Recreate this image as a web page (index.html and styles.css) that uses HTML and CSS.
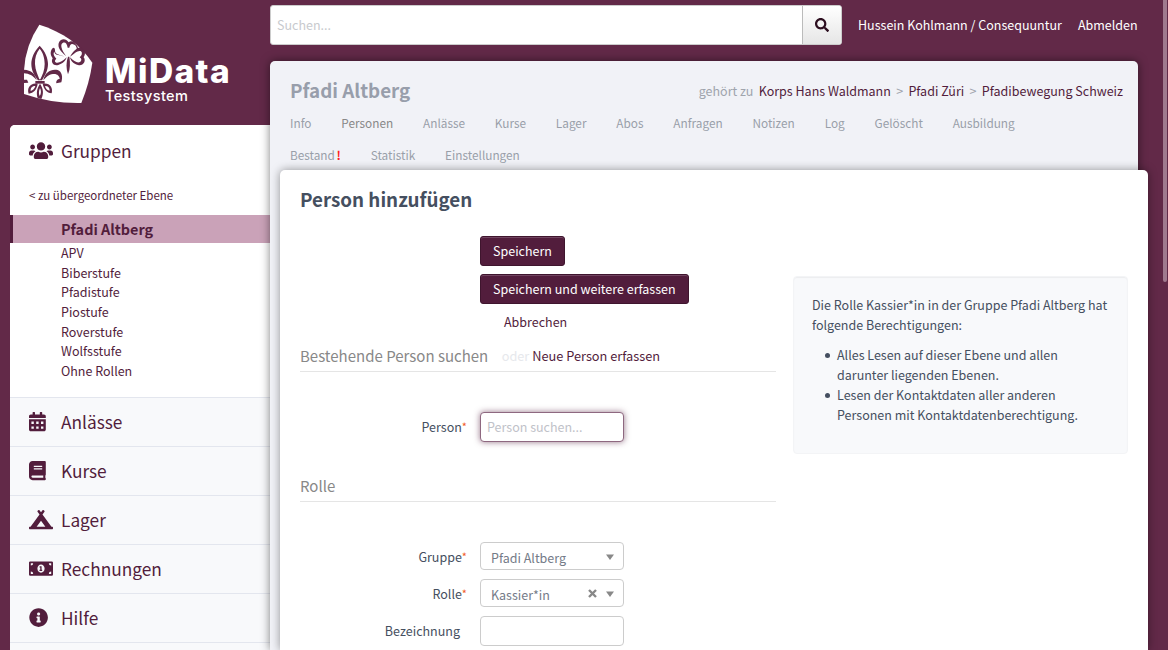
FILE: index.html
```html
<!DOCTYPE html>
<html lang="de">
<head>
<meta charset="utf-8">
<title>Person hinzufügen - MiData</title>
<link rel="stylesheet" href="styles.css">
</head>
<body>
<div class="page">
  <aside class="side">
    <a class="logo">
      <svg class="logo-mark" viewBox="0 0 240 270">
        <path fill="#fff" d="M58 14C91 24 124 40 152 60Q190 88 217 128Q209 187 184 249Q95 251 12 222V150Q16 76 58 14Z"/>
        <g class="ink">
          <path fill-rule="evenodd" d="M59 77C76 94 84 115 84 132C84 151 75 166 66 181H54C43 166 34 151 34 132C34 114 42 94 59 77ZM59 86C49 98 44 115 45 132C46 151 53 164 58 178H61C68 164 74 150 74 132C74 115 69 97 59 86Z"/>
          <path d="M46 183H74V191H46Z"/>
          <path d="M12 149C34 150 46 162 50 181C39 167 28 161 12 160Z"/>
          <path d="M70 181C75 156 93 146 113 150C126 155 129 170 124 187L109 190C108 184 111 177 119 177C119 167 110 160 99 162C85 164 78 172 70 181Z"/>
          <path d="M12 179H21L25 188L12 189Z"/>
          <path fill-rule="evenodd" d="M53 191C31 187 20 205 26 221C41 219 51 208 53 191ZM46 198C44 206 39 211 32 213C31 203 37 198 46 198Z"/>
          <path fill-rule="evenodd" d="M68 191C89 187 100 202 95 220C80 218 71 208 68 191ZM75 198C77 206 82 211 89 212C89 203 85 198 75 198Z"/>
          <path fill-rule="evenodd" d="M60 191C70 206 72 220 64 237L53 234C48 218 51 205 60 191ZM60 204C56 213 56 222 59 228C64 221 64 212 60 204Z"/>
          <path d="M138 108C121 94 113 83 116 70C120 56 137 53 146 67C153 59 165 65 170 78L163 74C154 69 150 73 148 83H143C141 70 135 65 128 69C120 74 124 88 138 108Z"/>
          <path d="M140 112C122 104 104 106 105 91C105 83 100 79 94 90C89 103 95 109 98 115C91 128 101 139 115 135C130 131 137 122 140 112C128 123 121 128 112 128C104 128 103 121 109 116C103 109 98 101 103 95C104 108 122 103 140 112Z"/>
          <path d="M150 110C162 90 177 77 189 87C199 97 194 106 191 112C200 124 189 139 174 135C160 132 152 123 150 112C163 125 174 131 181 125C187 120 183 115 179 112C186 106 188 99 183 94C175 89 164 100 150 110Z"/>
          <path d="M144 110C138 126 138 146 144 163C151 147 151 128 148 110Z"/>
          <path d="M166 74Q172 74 174 84Q183 80 188 90L183 93Q176 90 170 92Q171 82 166 74Z"/>
        </g>
      </svg>
      <span class="logo-text"><b>MiData</b><i>Testsystem</i></span>
    </a>
    <nav class="nav">
      <div class="nav-item nav-open">
        <svg class="ico" viewBox="0 0 640 512"><path d="M96 224c35.300 0 64-28.700 64-64s-28.700-64-64-64-64 28.700-64 64 28.700 64 64 64zm448 0c35.300 0 64-28.700 64-64s-28.700-64-64-64-64 28.700-64 64 28.700 64 64 64zm32 32h-64c-17.600 0-33.500 7.100-45.100 18.600 40.300 22.100 68.900 62 75.100 109.400h66c17.700 0 32-14.300 32-32v-32c0-35.300-28.700-64-64-64zm-256 0c61.900 0 112-50.100 112-112S381.900 32 320 32 208 82.100 208 144s50.100 112 112 112zm76.800 32h-8.300c-20.800 10-43.900 16-68.500 16s-47.600-6-68.500-16h-8.300C179.600 288 128 339.600 128 403.200V432c0 26.500 21.500 48 48 48h288c26.500 0 48-21.500 48-48v-28.800c0-63.600-51.600-115.200-115.200-115.200zm-223.700-13.400C161.500 263.100 145.600 256 128 256H64c-35.300 0-64 28.700-64 64v32c0 17.700 14.300 32 32 32h65.900c6.300-47.400 34.900-87.300 75.200-109.400z"/></svg>
        <span>Gruppen</span>
      </div>
      <div class="tree">
        <a class="up">&lt; zu übergeordneter Ebene</a>
        <a class="active">Pfadi Altberg</a>
        <ul class="groups">
          <li>APV</li><li>Biberstufe</li><li>Pfadistufe</li><li>Piostufe</li><li>Roverstufe</li><li>Wolfsstufe</li><li>Ohne Rollen</li>
        </ul>
      </div>
      <div class="nav-item">
        <svg class="ico" viewBox="0 0 640 512"><path fill-rule="evenodd" d="M400 64h-48V16c0-8.800-7.200-16-16-16h-32c-8.800 0-16 7.200-16 16v48H160V16c0-8.800-7.200-16-16-16h-32c-8.800 0-16 7.200-16 16v48H48C21.500 64 0 85.500 0 112v48h448v-48c0-26.500-21.500-48-48-48zM0 192H448V464c0 26.500-21.500 48-48 48H48c-26.500 0-48-21.500-48-48ZM64 256v64h64v-64zm128 0v64h64v-64zm128 0v64h64v-64zM64 384v64h64v-64zm128 0v64h64v-64zm128 0v64h64v-64z"/></svg>
        <span>Anlässe</span>
      </div>
      <div class="nav-item">
        <svg class="ico" viewBox="0 0 640 512"><path d="M448 360V24c0-13.300-10.700-24-24-24H96C43 0 0 43 0 96v320c0 53 43 96 96 96h328c13.300 0 24-10.700 24-24v-16c0-7.500-3.500-14.300-8.900-18.700-4.200-15.400-4.200-59.300 0-74.700 5.400-4.300 8.900-11.100 8.900-18.600zM128 134c0-3.300 2.700-6 6-6h212c3.300 0 6 2.700 6 6v20c0 3.300-2.700 6-6 6H134c-3.300 0-6-2.700-6-6v-20zm0 64c0-3.300 2.700-6 6-6h212c3.300 0 6 2.700 6 6v20c0 3.300-2.700 6-6 6H134c-3.300 0-6-2.700-6-6v-20zm253.400 250H96c-17.700 0-32-14.300-32-32 0-17.600 14.400-32 32-32h285.400c-1.900 17.100-1.900 46.900 0 64z"/></svg>
        <span>Kurse</span>
      </div>
      <div class="nav-item">
        <svg class="ico" viewBox="0 0 640 512"><path d="M624 448h-24.680L359.540 117.750l53.410-73.550c5.190-7.150 3.610-17.160-3.540-22.350l-25.900-18.790c-7.150-5.190-17.150-3.610-22.350 3.550L320 63.300 278.830 6.600c-5.190-7.150-15.200-8.740-22.350-3.550l-25.880 18.800c-7.150 5.190-8.740 15.200-3.540 22.350l53.410 73.550L40.680 448H16c-8.840 0-16 7.160-16 16v32c0 8.840 7.160 16 16 16h608c8.840 0 16-7.160 16-16v-32c0-8.840-7.160-16-16-16zM320 288l116.360 160H203.640L320 288z"/></svg>
        <span>Lager</span>
      </div>
      <div class="nav-item">
        <svg class="ico" viewBox="0 0 640 512"><path fill-rule="evenodd" d="M32 64H608Q640 64 640 96V416Q640 448 608 448H32Q0 448 0 416V96Q0 64 32 64ZM48 112V176Q112 176 112 112ZM528 112Q528 176 592 176V112ZM48 336V400H112Q112 336 48 336ZM592 336Q528 336 528 400H592ZM320 144C267 144 224 194 224 256S267 368 320 368S416 318 416 256S373 144 320 144ZM304 192H336V288H352V320H280V288H300V228H280V202Z"/></svg>
        <span>Rechnungen</span>
      </div>
      <div class="nav-item">
        <svg class="ico" viewBox="0 0 640 512"><path d="M256 8C119.043 8 8 119.083 8 256c0 136.997 111.043 248 248 248s248-111.003 248-248C504 119.083 392.957 8 256 8zm0 110c23.196 0 42 18.804 42 42s-18.804 42-42 42-42-18.804-42-42 18.804-42 42-42zm56 254c0 6.627-5.373 12-12 12h-88c-6.627 0-12-5.373-12-12v-24c0-6.627 5.373-12 12-12h12v-64h-12c-6.627 0-12-5.373-12-12v-24c0-6.627 5.373-12 12-12h64c6.627 0 12 5.373 12 12v100h12c6.627 0 12 5.373 12 12v24z"/></svg>
        <span>Hilfe</span>
      </div>
      <div class="nav-item"></div>
    </nav>
  </aside>

  <main class="main">
    <header class="top">
      <div class="search">
        <div class="search-field">Suchen...</div>
        <button class="search-btn"><svg viewBox="0 0 512 512"><path d="M505 442.700L405.300 343c-4.500-4.500-10.600-7-17-7H372c27.600-35.300 44-79.700 44-128C416 93.100 322.900 0 208 0S0 93.100 0 208s93.100 208 208 208c48.300 0 92.700-16.400 128-44v16.300c0 6.400 2.500 12.500 7 17l99.700 99.700c9.400 9.400 24.600 9.400 33.900 0l28.300-28.300c9.400-9.400 9.400-24.600.1-34zM208 336c-70.700 0-128-57.200-128-128 0-70.700 57.200-128 128-128 70.700 0 128 57.200 128 128 0 70.700-57.200 128-128 128z"/></svg></button>
      </div>
      <a class="user">Hussein Kohlmann / Consequuntur</a>
      <a class="logout">Abmelden</a>
    </header>

    <section class="sheet">
      <div class="sheet-head">
        <h1>Pfadi Altberg</h1>
        <div class="crumbs"><span>gehört zu</span><a>Korps Hans Waldmann</a><span>&gt;</span><a>Pfadi Züri</a><span>&gt;</span><a>Pfadibewegung Schweiz</a></div>
      </div>
      <nav class="tabs">
        <a>Info</a><a class="on">Personen</a><a>Anlässe</a><a>Kurse</a><a>Lager</a><a>Abos</a><a>Anfragen</a><a>Notizen</a><a>Log</a><a>Gelöscht</a><a>Ausbildung</a><a>Bestand <b>!</b></a><a>Statistik</a><a>Einstellungen</a>
      </nav>
      <div class="content">
        <h2>Person hinzufügen</h2>
        <div class="cols">
          <form class="form">
            <div class="actions">
              <button type="button" class="btn">Speichern</button>
              <button type="button" class="btn">Speichern und weitere erfassen</button>
              <a class="cancel">Abbrechen</a>
            </div>
            <div class="legend"><span>Bestehende Person suchen</span><em>oder</em><a>Neue Person erfassen</a></div>
            <div class="row person"><label>Person<sup>*</sup></label><div class="box focus">Person suchen...</div></div>
            <div class="legend second"><span>Rolle</span></div>
            <div class="row group"><label>Gruppe<sup>*</sup></label><div class="box select"><span>Pfadi Altberg</span><svg class="caret" viewBox="0 0 8 6"><path d="M0 .5H8L4 6Z"/></svg></div></div>
            <div class="row role"><label>Rolle<sup>*</sup></label><div class="box select"><span>Kassier*in</span><svg class="clear" viewBox="0 0 9 9"><path d="M1 1L8 8M8 1L1 8"/></svg><svg class="caret" viewBox="0 0 8 6"><path d="M0 .5H8L4 6Z"/></svg></div></div>
            <div class="row desc"><label class="plain">Bezeichnung</label><div class="box"></div></div>
          </form>
          <aside class="well">
            <p>Die Rolle Kassier*in in der Gruppe Pfadi Altberg hat folgende Berechtigungen:</p>
            <ul>
              <li>Alles Lesen auf dieser Ebene und allen darunter liegenden Ebenen.</li>
              <li>Lesen der Kontaktdaten aller anderen Personen mit Kontaktdatenberechtigung.</li>
            </ul>
          </aside>
        </div>
      </div>
    </section>
  </main>
</div>
<div class="scroll-thumb"></div>
</body>
</html>
```
FILE: styles.css
```css
* { box-sizing: border-box; }
html, body { margin: 0; height: 100%; overflow: hidden; }
body {
  background: #622948;
  color: #454f60;
  font-family: "Noto Sans CJK SC", "Open Sans", sans-serif;
  font-size: 12.5px;
  line-height: 20px;
}
a { color: #521d3c; white-space: nowrap; }
ul, p, h1, h2 { margin: 0; padding: 0; }
.page { display: flex; height: 650px; }

.side { width: 270px; display: flex; flex-direction: column; flex: none; }
.logo { display: flex; height: 125px; padding: 20px 0 0 20px; flex: none; color: #fff; }
.logo-mark { width: 80px; height: 90px; flex: none; }
.ink { fill: #622948; }
.logo-text { display: flex; flex-direction: column; padding: 35px 0 0 5px; font-family: Inter, sans-serif; }
.logo-text b { font-size: 33.5px; line-height: 33px; font-weight: 800; letter-spacing: 1.4px; }
.logo-text i { font-size: 14.5px; line-height: 14px; font-style: normal; font-weight: 500; letter-spacing: .35px; margin-top: 1px; }
.nav { flex: 1; margin-left: 10px; background: #fff; border-radius: 5px 0 0 0; overflow: hidden; }
.nav-item {
  display: flex; align-items: center; height: 49px; padding-left: 19px;
  background: #f8f9fb; border-top: 1px solid #e3e6ee;
  color: #521d3c; font-size: 17.3px; line-height: 24px;
}
.nav-open { background: #fff; border-top-color: transparent; height: 52px; padding-bottom: 1px; }
.ico { width: 24px; height: 19.2px; margin-right: 8px; fill: #521d3c; flex: none; }
.tree { height: 220px; }
.up { display: block; padding: 8px 0 10px 19px; font-size: 11.5px; }
.active {
  display: block; height: 28px; line-height: 28px; padding-left: 48px;
  border-left: 3px solid #521d3c; background: #caa2b8; font-size: 14.4px; font-weight: 700;
}
.groups { list-style: none; padding: 0 0 0 51px; color: #521d3c; font-size: 12.5px; line-height: 19.67px; }

.main { flex: 1; min-width: 0; display: flex; flex-direction: column; }
.top { display: flex; align-items: center; height: 61px; padding: 0 0 11px; flex: none; }
.search { display: flex; width: 572px; height: 40px; border: 1px solid #ccc; border-radius: 3px; overflow: hidden; background: #fff; }
.search-field { flex: 1; padding: 0 6px; line-height: 38px; color: #c8cace; }
.search-btn {
  width: 39px; padding: 0; border: 0; border-left: 1px solid #bbb;
  background: linear-gradient(#fff, #e6e6e6); display: flex; align-items: center; justify-content: center;
}
.search-btn svg { width: 14px; height: 14px; fill: #2d0f20; }
.user, .logout { color: #fff; margin-left: 16px; }

.sheet {
  flex: 1; width: 868px; background: #f1f2f7; border-radius: 5px 5px 0 0;
  box-shadow: 0 0 10px rgba(0, 0, 0, .5); display: flex; flex-direction: column;
}
.sheet-head { display: flex; justify-content: space-between; padding: 16px 15px 0 20px; height: 46px; }
h1 { font-size: 18.8px; line-height: 26px; color: #989eab; }
.crumbs { display: flex; gap: 5.3px; padding-top: 4px; color: #a0a4ad; }
.tabs { display: flex; flex-wrap: wrap; width: 780px; padding-left: 20px; gap: 0 29.85px; line-height: 32px; font-size: 11.8px; }
.tabs a { color: #999fa9; }
.tabs .on { color: #888; }
.tabs b { color: #f22; font-weight: 700; margin-left: -1px; }
.content {
  flex: 1; width: 868px; margin: -1px 0 0 10px; padding: 16px 20px 0; background: #fff;
  border-radius: 5px 5px 0 0; box-shadow: 0 0 10px rgba(0, 0, 0, .4);
  clip-path: inset(-10px -20px 0 -10px);
}
h2 { font-size: 18.8px; line-height: 26px; color: #454f60; }
.cols { display: flex; gap: 17px; align-items: flex-start; }
.form { width: 476px; padding-top: 24px; }
.actions { display: flex; flex-direction: column; align-items: flex-start; gap: 8px; padding-left: 180px; }
.btn {
  height: 30px; padding: 0 12px 1px; border: 1px solid #3f152e; border-radius: 3px; background: #521d3c;
  box-shadow: inset 0 1px 0 #714560; color: #fff; font: inherit; line-height: 26px; white-space: nowrap;
}
.cancel { margin-left: 24px; }
.legend { display: flex; align-items: center; height: 40px; padding-top: 8px; border-bottom: 1px solid #e5e5e5; color: #888; }
.legend span { font-size: 15px; }
.legend em { font-style: normal; color: #e6e8ec; margin: 0 3px 0 13.5px; font-size: 12.7px; }
.legend a { font-size: 12.75px; }
.row { display: flex; align-items: center; }
.row label { width: 167px; margin-right: 13px; text-align: right; }
.row .plain { width: 160px; margin-right: 20px; }
.group label, .role label { padding-top: 2px; }
sup { color: #f05a28; font-size: 11px; line-height: 0; vertical-align: 1px; }
.box { width: 144px; height: 30px; border: 1px solid #ccc; border-radius: 4px; background: #fff; padding: 0 6px; line-height: 28px; }
.focus { border-color: #8e6880; box-shadow: 0 0 6px rgba(82, 29, 60, .6); color: #bfc2c9; }
.person { margin-top: 40px; }
.second { margin-top: 20px; height: 40px; }
.group { margin-top: 40px; }
.role, .desc { margin-top: 9px; }
.select { display: flex; align-items: center; height: 28px; padding: 4px 9px 0 10px; line-height: 24px; color: #747b88; }
.select span { flex: 1; }
.caret { width: 8px; height: 6px; fill: #888; margin-top: -2px; }
.clear { width: 9px; height: 9px; stroke: #888; stroke-width: 2.4; margin: -4px 9px 0 0; }
.well {
  width: 335px; height: 178px; margin-top: 64px; padding: 18px 18px; border: 1px solid #f3f4f6;
  border-radius: 4px; background: #f8f9fb; box-shadow: inset 0 1px 1px rgba(0, 0, 0, .05);
}
.well ul { margin-top: 10px; padding-left: 13px; list-style: none; }
.well li { display: grid; grid-template-columns: 12px 1fr; }
.well li::before { content: ""; width: 5px; height: 5px; margin-top: 8px; border-radius: 50%; background: #454f60; }
.scroll-thumb { position: fixed; right: 1px; top: 0; width: 4px; height: 282px; background: #a17a8f; border-radius: 0 0 2px 2px; }
```
